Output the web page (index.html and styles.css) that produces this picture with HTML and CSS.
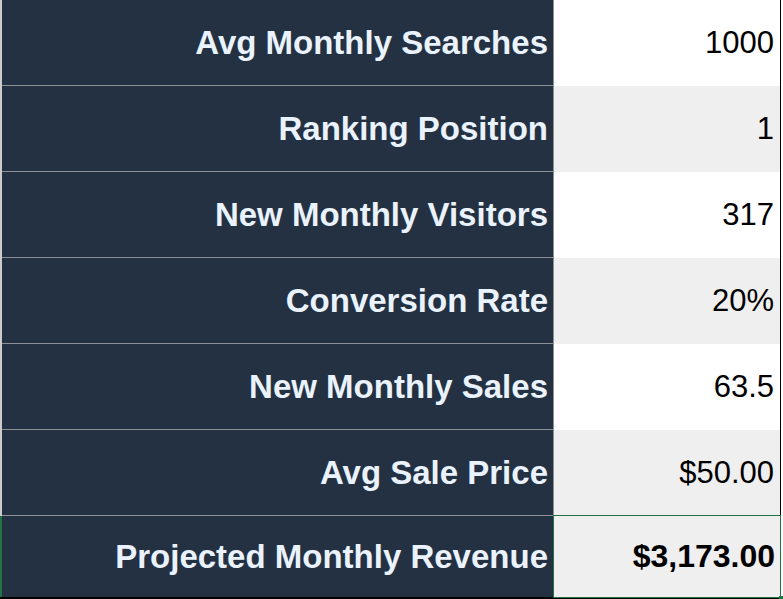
FILE: index.html
```html
<!DOCTYPE html>
<html>
<head>
<meta charset="utf-8">
<link rel="stylesheet" href="styles.css">
</head>
<body>
<div class="sheet">
  <div class="row"><div class="label">Avg Monthly Searches</div><div class="value">1000</div></div>
  <div class="row alt"><div class="label">Ranking Position</div><div class="value">1</div></div>
  <div class="row"><div class="label">New Monthly Visitors</div><div class="value">317</div></div>
  <div class="row alt"><div class="label">Conversion Rate</div><div class="value">20%</div></div>
  <div class="row"><div class="label">New Monthly Sales</div><div class="value">63.5</div></div>
  <div class="row alt"><div class="label">Avg Sale Price</div><div class="value">$50.00</div></div>
  <div class="row alt total"><div class="label">Projected Monthly Revenue</div><div class="value">$3,173.00</div></div>
</div>
</body>
</html>
```
FILE: styles.css
```css
html, body {
  margin: 0;
  padding: 0;
  background: #ffffff;
}
body {
  width: 783px;
  height: 599px;
  overflow: hidden;
  font-family: "Liberation Sans", Arial, sans-serif;
}
.sheet {
  display: flex;
  flex-direction: column;
  width: 781px;
  border-bottom: 2px solid #000000;
}
.row {
  display: flex;
  height: 86px;
  border-left: 2px solid #cbcbcb;
}
.label {
  box-sizing: border-box;
  width: 552px;
  background: #233142;
  border-right: 1px solid #8c9096;
  border-bottom: 1px solid #8c9096;
  color: #eaf3fd;
  font-weight: bold;
  font-size: 33px;
  display: flex;
  align-items: center;
  justify-content: flex-end;
  padding-right: 5px;
}
.value {
  box-sizing: border-box;
  width: 227px;
  background: #ffffff;
  border-right: 1px solid #000000;
  color: #000000;
  font-size: 31px;
  display: flex;
  align-items: center;
  justify-content: flex-end;
  padding-right: 6px;
}
.row.alt .value {
  background: #efefef;
}
.row.total {
  height: 81px;
  border-left-color: #217346;
}
.row.total .label {
  border-bottom: none;
}
.row.total .value {
  position: relative;
  font-weight: bold;
  font-size: 32px;
  width: 226px;
  border-right: none;
  outline: 1px solid #217346;
  padding-right: 5px;
}
.row.total .value::after {
  content: "";
  position: absolute;
  right: -3px;
  bottom: -3px;
  width: 4px;
  height: 4px;
  background: #217346;
}
```
